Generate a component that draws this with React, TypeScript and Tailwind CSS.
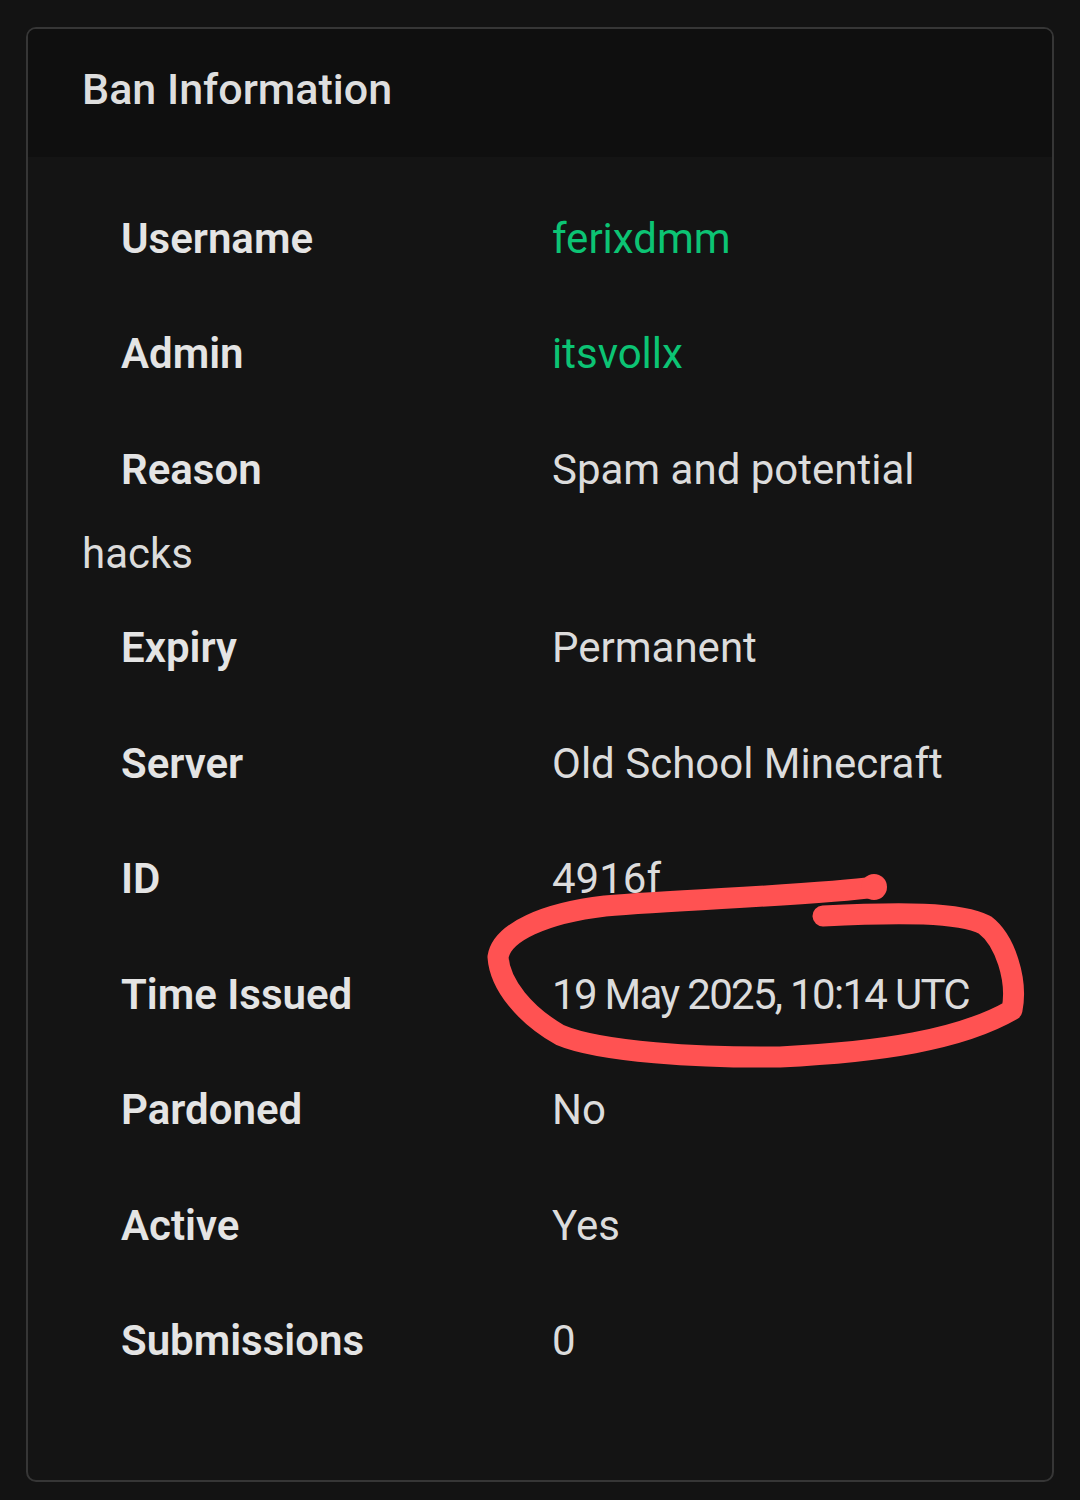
import React from "react";

type Row = { label: string; value: string; link?: boolean; wrap?: string; tight?: boolean };

const rows: Row[] = [
  { label: "Username", value: "ferixdmm", link: true },
  { label: "Admin", value: "itsvollx", link: true },
  { label: "Reason", value: "Spam and potential", wrap: "hacks" },
  { label: "Expiry", value: "Permanent" },
  { label: "Server", value: "Old School Minecraft" },
  { label: "ID", value: "4916f" },
  { label: "Time Issued", value: "19 May 2025, 10:14 UTC", tight: true },
  { label: "Pardoned", value: "No" },
  { label: "Active", value: "Yes" },
  { label: "Submissions", value: "0" },
];

function Scribble() {
  // hand-drawn red circle around the issued time
  return (
    <svg
      className="pointer-events-none absolute left-0 top-0"
      width="1080"
      height="1500"
      viewBox="0 0 1080 1500"
    >
      <path
        d="M 875 887 C 820 895, 690 899, 605 906 C 545 913, 502 932, 498 957 C 500 985, 525 1015, 560 1035 C 600 1052, 700 1058, 780 1057 C 880 1052, 960 1040, 1012 1010 C 1018 980, 1005 940, 985 925 C 960 912, 900 912, 823 916"
        fill="none"
        stroke="#ff5252"
        strokeWidth="21"
        strokeLinecap="round"
        strokeLinejoin="round"
      />
      <circle cx="874" cy="887" r="13" fill="#ff5252" />
    </svg>
  );
}

export default function App() {
  return (
    <div
      className="relative min-h-[1500px] w-[1080px] bg-[#131313] pt-[27px] text-[#e2e2e2]"
      style={{ fontFamily: "Roboto, 'Noto Sans', sans-serif" }}
    >
      <div className="mx-[26px] overflow-hidden rounded-[10px] border-2 border-[#363636] bg-[#141414]">
        {/* Header */}
        <div className="flex h-[128px] items-center bg-[#0f0f0f] pb-[8px] pl-[54px]">
          <h2 className="text-[43px] font-medium leading-none text-[#dedede]">
            Ban Information
          </h2>
        </div>

        {/* Details */}
        <div className="pb-[81px] pl-[54px] pt-[24px]">
          {rows.map((r) => (
            <div key={r.label}>
              <div className="grid h-[115.5px] grid-cols-[470px_1fr] items-center">
                <span className="pl-[39px] text-[42px] font-semibold leading-none text-[#e4e4e4]">
                  {r.label}
                </span>
                <span
                  className={
                    r.link
                      ? "text-[42px] leading-none text-[#0cc474]"
                      : r.tight
                        ? "text-[42px] leading-none tracking-[-1.7px] text-[#dcdcdc]"
                        : "text-[42px] leading-none text-[#dcdcdc]"
                  }
                >
                  {r.value}
                </span>
              </div>
              {r.wrap && (
                <div className="h-[63px] pt-[5px] text-[42px] leading-[42px] text-[#dcdcdc]">
                  {r.wrap}
                </div>
              )}
            </div>
          ))}
        </div>
      </div>
      <Scribble />
    </div>
  );
}
